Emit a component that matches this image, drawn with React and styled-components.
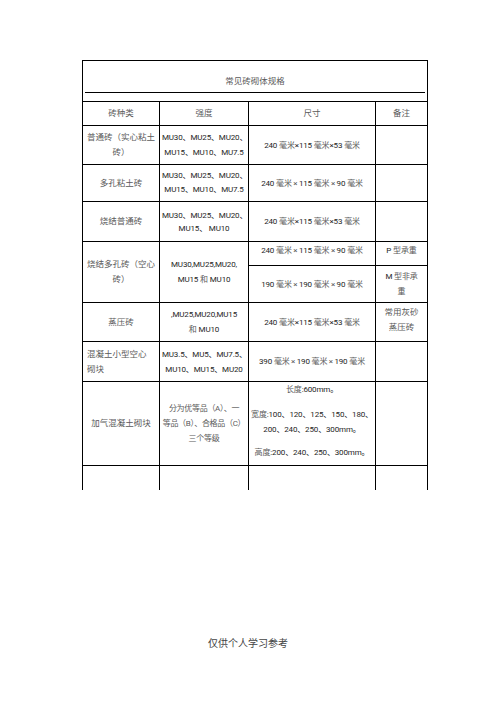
import React from 'react';
import styled, { createGlobalStyle } from 'styled-components';

const GlobalStyle = createGlobalStyle`
  html, body {
    margin: 0;
    padding: 0;
    background: #fff;
  }
  body {
    font-family: "Roboto", "Noto Sans CJK SC", sans-serif;
    color: #3a3a3a;
  }
`;

const Page = styled.div`
  width: 496px;
  height: 702px;
  box-sizing: border-box;
  padding: 60px 0 0 82px;
  overflow: hidden;
`;

const Grid = styled.table`
  border-collapse: collapse;
  table-layout: fixed;
  width: 345px;
`;

const Cell = styled.td`
  border: 1px solid #000;
  border-bottom: ${(p) => (p.$open ? 'none' : '1px solid #000')};
  height: ${(p) => p.$h}px;
  box-sizing: border-box;
  padding: ${(p) => p.$pad || '0 2px'};
  text-align: ${(p) => p.$align || 'center'};
  vertical-align: ${(p) => p.$valign || 'middle'};
  line-height: ${(p) => p.$lh || 15}px;
  font-size: ${(p) => p.$fs || (p.$dark ? 8 : 8.5)}px;
  color: ${(p) => (p.$dark ? '#1e1e1e' : '#5a5a5a')};
  white-space: nowrap;
  overflow: hidden;
  letter-spacing: ${(p) => p.$ls || (p.$dark ? '-0.15px' : '0')};
`;

const TitleCell = styled.td`
  border: 1px solid #000;
  border-bottom: none;
  height: 41px;
  box-sizing: border-box;
  padding: 14px 2px 0;
  vertical-align: top;
`;

const Title = styled.div`
  text-align: center;
  line-height: 12px;
  font-size: 8.5px;
  color: #5a5a5a;
`;

const Rule = styled.div`
  margin-top: 5px;
  border-bottom: 1.5px solid #000;
`;

const Para = styled.p`
  margin: 0 0 ${(p) => p.$gap || 0}px;
  line-height: 15px;
`;

const Han = styled.span`
  color: #5a5a5a;
`;

const Wide = styled.span`
  padding: 0 1.5px;
  color: #5a5a5a;
`;

const Footer = styled.div`
  margin: 148px 0 0 -82px;
  width: 496px;
  text-align: center;
  font-size: 10px;
  line-height: 12px;
  color: #444;
`;

const MU = (
  <>
    MU30、MU25、MU20、
    <br />
    MU15、MU10、MU7.5
  </>
);

const narrow = (a, b, c) => (
  <>
    {a} <Han>毫米</Han>×{b} <Han>毫米</Han>×{c} <Han>毫米</Han>
  </>
);

const wide = (a, b, c) => (
  <>
    {a} <Han>毫米</Han>
    <Wide>×</Wide>
    {b} <Han>毫米</Han>
    <Wide>×</Wide>
    {c} <Han>毫米</Han>
  </>
);

export default function App() {
  return (
    <>
      <GlobalStyle />
      <Page>
        <Grid>
          <colgroup>
            <col style={{ width: 77 }} />
            <col style={{ width: 89 }} />
            <col style={{ width: 127 }} />
            <col style={{ width: 52 }} />
          </colgroup>
          <tbody>
            <tr>
              <TitleCell colSpan={4}>
                <Title>常见砖砌体规格</Title>
                <Rule />
              </TitleCell>
            </tr>
            <tr>
              <Cell $h={24}>砖种类</Cell>
              <Cell $h={24}>强度</Cell>
              <Cell $h={24}>尺寸</Cell>
              <Cell $h={24}>备注</Cell>
            </tr>
            <tr>
              <Cell $h={39}>
                普通砖（实心粘土
                <br />
                砖）
              </Cell>
              <Cell $h={39} $dark>{MU}</Cell>
              <Cell $h={39} $dark>{narrow(240, 115, 53)}</Cell>
              <Cell $h={39} />
            </tr>
            <tr>
              <Cell $h={37}>多孔粘土砖</Cell>
              <Cell $h={37} $dark $lh={14}>{MU}</Cell>
              <Cell $h={37} $dark>{wide(240, 115, 90)}</Cell>
              <Cell $h={37} />
            </tr>
            <tr>
              <Cell $h={40}>烧结普通砖</Cell>
              <Cell $h={40} $dark $lh={13}>
                MU30、MU25、MU20、
                <br />
                MU15、 MU10
              </Cell>
              <Cell $h={40} $dark>{narrow(240, 115, 53)}</Cell>
              <Cell $h={40} />
            </tr>
            <tr>
              <Cell $h={24} rowSpan={2}>
                烧结多孔砖（空心
                <br />
                砖）
              </Cell>
              <Cell $h={24} rowSpan={2} $dark>
                MU30,MU25,MU20,
                <br />
                MU15 <Han>和</Han> MU10
              </Cell>
              <Cell $h={24} $dark $valign="top" $pad="1px 2px 0">
                {wide(240, 115, 90)}
              </Cell>
              <Cell $h={24} $dark $valign="top" $pad="1px 2px 0">
                P <Han>型承重</Han>
              </Cell>
            </tr>
            <tr>
              <Cell $h={37} $dark>
                {wide(190, 190, 90)}
              </Cell>
              <Cell $h={37} $dark>
                M <Han>型非承</Han>
                <br />
                <Han>重</Han>
              </Cell>
            </tr>
            <tr>
              <Cell $h={39}>蒸压砖</Cell>
              <Cell $h={39} $dark>
                ,MU25,MU20,MU15
                <br />
                <Han>和</Han> MU10
              </Cell>
              <Cell $h={39} $dark>{narrow(240, 115, 53)}</Cell>
              <Cell $h={39} $valign="top" $pad="2px 2px 0">
                常用灰砂
                <br />
                蒸压砖
              </Cell>
            </tr>
            <tr>
              <Cell $h={40} $align="left" $pad="0 4px">
                混凝土小型空心
                <br />
                砌块
              </Cell>
              <Cell $h={40} $dark>
                MU3.5、MU5、MU7.5、
                <br />
                MU10、MU15、MU20
              </Cell>
              <Cell $h={40} $dark>
                {wide(390, 190, 190)}
              </Cell>
              <Cell $h={40} />
            </tr>
            <tr>
              <Cell $h={84}>加气混凝土砌块</Cell>
              <Cell $h={84} $fs={8} $ls="-0.3px">
                分为优等品（A）、一
                <br />
                等品（B）、合格品（C）
                <br />
                三个等级
              </Cell>
              <Cell $h={84} $dark $valign="top" $pad="0 1px">
                <Para $gap={10}>
                  <Han>长度</Han>:600mm。
                </Para>
                <Para>
                  <Han>宽度</Han>:100、120、125、150、180、
                </Para>
                <Para $gap={8}>200、240、250、300mm。</Para>
                <Para>
                  <Han>高度</Han>:200、240、250、300mm。
                </Para>
              </Cell>
              <Cell $h={84} />
            </tr>
            <tr>
              <Cell $h={24} $open />
              <Cell $h={24} $open />
              <Cell $h={24} $open />
              <Cell $h={24} $open />
            </tr>
          </tbody>
        </Grid>
        <Footer>仅供个人学习参考</Footer>
      </Page>
    </>
  );
}
